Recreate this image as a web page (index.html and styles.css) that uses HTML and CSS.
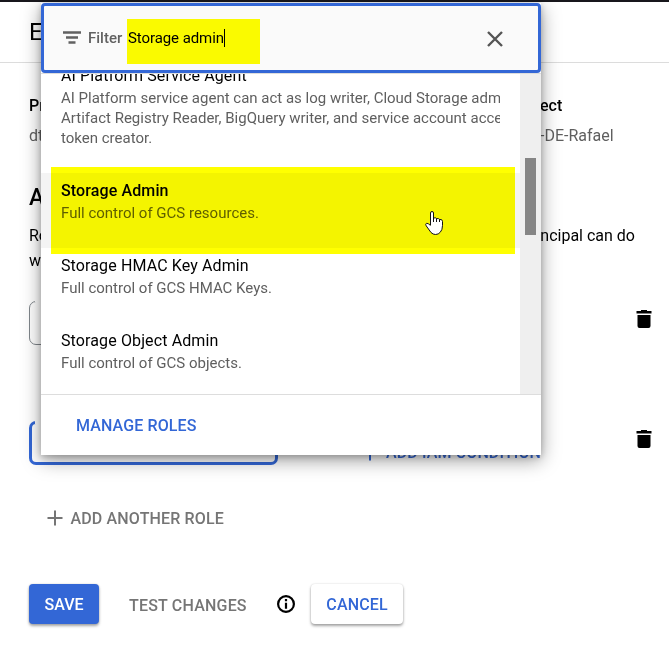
FILE: index.html
```html
<!DOCTYPE html>
<html lang="en">
<head>
<meta charset="utf-8">
<title>Permissions</title>
<link rel="stylesheet" href="styles.css">
</head>
<body>
<main class="page">
  <header class="page-header"><h1>E</h1></header>
  <section class="identity">
    <div class="identity-col"><strong>Pr</strong><span>dt</span></div>
    <div class="identity-col project"><strong>ect</strong><span>-DE-Rafael</span></div>
  </section>
  <section class="assign">
    <h2>A</h2>
    <div class="assign-line"><span>Ro</span><span class="line-end">ncipal can do</span></div>
    <div class="assign-line"><span>w</span></div>
  </section>
  <section class="role-row">
    <div class="select"></div>
    <svg class="trash" viewBox="0 0 16 18"><path d="M5 0h6v1h4.500v2.500H.5V1H5zM1.500 5h13v11q0 2-2 2h-9q-2 0-2-2z"/></svg>
  </section>
  <section class="role-row second">
    <div class="select active"></div>
    <div class="condition"><svg class="plus" viewBox="0 0 16 16"><path d="M8 .5v15M.5 8h15"/></svg><span>ADD IAM CONDITION</span></div>
    <svg class="trash" viewBox="0 0 16 18"><path d="M5 0h6v1h4.500v2.500H.5V1H5zM1.500 5h13v11q0 2-2 2h-9q-2 0-2-2z"/></svg>
  </section>
  <div class="add-role"><svg class="plus" viewBox="0 0 16 16"><path d="M8 .5v15M.5 8h15"/></svg><span>ADD ANOTHER ROLE</span></div>
  <footer class="actions">
    <button class="btn save">SAVE</button>
    <span class="test">TEST CHANGES</span>
    <svg class="info" viewBox="0 0 18 18"><circle cx="9" cy="9" r="7.900"/><path d="M9 4v2.200M9 7.700v6"/></svg>
    <button class="btn cancel">CANCEL</button>
  </footer>
</main>

<div class="panel">
  <div class="filter">
    <svg class="filter-icon" viewBox="0 0 18 13"><path d="M0 1.500h18M3 6.500h12M5.500 11.500h7"/></svg>
    <span class="filter-label">Filter</span>
    <span class="query"><span class="typed">Storage admin</span></span>
    <svg class="close" viewBox="0 0 16 16"><path d="M1 1l14 14M15 1L1 15"/></svg>
  </div>
  <div class="list">
    <div class="options">
      <div class="option first"><div class="name">AI Platform Service Agent</div><div class="desc">AI Platform service agent can act as log writer, Cloud Storage adm<br>Artifact Registry Reader, BigQuery writer, and service account acce<br>token creator.</div></div>
      <div class="option current"><div class="name">Storage Admin</div><div class="desc">Full control of GCS resources.</div></div>
      <div class="option"><div class="name">Storage HMAC Key Admin</div><div class="desc">Full control of GCS HMAC Keys.</div></div>
      <div class="option"><div class="name">Storage Object Admin</div><div class="desc">Full control of GCS objects.</div></div>
    </div>
    <div class="scrollbar"><div class="thumb"></div></div>
  </div>
  <div class="panel-footer">MANAGE ROLES</div>
  <div class="marker"></div>
  <svg class="pointer" viewBox="0 0 18 24"><path d="M5.500 14V2q0-1.500 1.500-1.500T8.500 2v5q2.600-.6 3 .6 2.400-.4 3 .8 3-.3 3 2v4q0 4.500-2.200 6.800Q13.500 23.500 10.500 23.500 8 23.500 6 21.500L1.200 14.800Q0 12.800 1.500 12.300 3 12 5.500 14.500M8.500 7v4M11.500 7.500V11M14.500 8.300V11"/></svg>
</div>
</body>
</html>
```

FILE: styles.css
```css
* { box-sizing: border-box; }
body { margin: 0; background: #fff; font-family: Roboto, sans-serif; font-size: 16px; color: #000; }
h1, h2 { margin: 0; font-weight: 400; }
svg { display: block; flex: none; }

.page { width: 669px; height: 656px; overflow: hidden; border-top: 2px solid #18171c; }
.page-header { height: 61px; padding: 15px 29px; border-bottom: 1px solid #dcdcdc; }
.page-header h1 { font-size: 24px; line-height: 30px; }

.identity { display: flex; height: 117px; padding: 31px 29px 0; }
.identity-col { display: flex; flex: none; flex-direction: column; width: 511px; line-height: 24px; gap: 6px; }
.identity-col strong { font-weight: 500; }
.identity-col span { color: #5f5f5f; }
.project { width: 130px; }

.assign { height: 121px; padding: 4px 29px 0; }
.assign h2 { font-size: 23px; font-weight: 500; line-height: 28px; margin-bottom: 11px; }
.assign-line { display: flex; height: 25px; line-height: 25px; }
.line-end { margin-left: auto; margin-right: 5px; }

.role-row { display: flex; align-items: flex-start; height: 120px; padding: 0 17px 0 29px; }
.select { position: relative; width: 249px; height: 44px; border: 1px solid #80868b; border-radius: 7px; }
.select.active { border: 3px solid #3367d6; }
/* label notch in the outlined field's top border */
.select::before { content: ""; position: absolute; left: 5px; top: -1px; width: 60px; height: 1px; background: #fff; }
.select.active::before { left: 3px; top: -3px; height: 3px; }
.trash { width: 16px; height: 18px; margin: 9px 0 0 auto; }
.second { height: 84px; }
.condition { display: flex; align-items: center; gap: 8px; margin: 20px 0 0 84px; color: #3367d6; font-weight: 500; line-height: 24px; letter-spacing: .12px; }
.plus { width: 16px; height: 16px; fill: none; stroke: currentColor; stroke-width: 2; }

.add-role { display: flex; align-items: center; gap: 7.500px; height: 26px; padding-left: 47px; color: #757575; font-weight: 500; letter-spacing: .15px; }
.actions { display: flex; align-items: center; margin-top: 52px; padding-left: 29px; height: 41px; }
.btn { height: 40px; border: 0; border-radius: 4px; padding: 1px 0 0; font: 500 16px Roboto, sans-serif; box-shadow: 0 2px 3px rgba(0,0,0,.35), 0 0 2px rgba(0,0,0,.15); }
.save { width: 70px; background: #3367d6; color: #fff; }
.test { width: 118px; margin: 3px 0 0 30px; color: #757575; font-weight: 500; letter-spacing: .2px; white-space: nowrap; }
.info { width: 18px; height: 18px; margin: 0 16px 0 30px; fill: none; stroke: #000; stroke-width: 2.200; }
.cancel { width: 92px; background: #fff; color: #3367d6; letter-spacing: .15px; }

.panel { position: absolute; left: 41px; top: 3px; width: 500px; height: 452px; display: flex; flex-direction: column; background: #fff; box-shadow: 0 5px 18px rgba(0,0,0,.4), 0 2px 6px rgba(0,0,0,.2); }
.filter { display: flex; align-items: flex-start; height: 70px; flex: none; border: 3px solid #3367d6; border-radius: 4px; background: #fafafa; }
.filter-icon { width: 18px; height: 13px; margin: 25px 0 0 19px; fill: none; stroke: #616161; stroke-width: 2.600; }
.filter-label { width: 39px; margin: 23px 0 0 7px; font-size: 15px; font-weight: 500; line-height: 18px; color: #616161; }
.query { width: 133px; height: 45px; margin-top: 13px; padding: 10px 0 0 1px; background: #fafa00; font-size: 15px; line-height: 18px; letter-spacing: -.08px; }
.typed { display: inline-block; border-right: 1px solid #000; }
.close { width: 16px; height: 16px; margin: 25px 35px 0 auto; fill: none; stroke: #555; stroke-width: 2.400; }

.list { display: flex; height: 321px; flex: none; overflow: hidden; border-top: 1px solid #ddd; }
.options { width: 479px; margin-top: -16px; }
.option { height: 75px; padding: 6px 20px 0; white-space: nowrap; }
.first { height: 115px; }
.current { background: #f4f4f4; }
.name { line-height: 24px; letter-spacing: .12px; }
.current .name { font-weight: 500; }
.desc { font-size: 15px; line-height: 20px; color: #5f5f5f; overflow: hidden; }
.scrollbar { width: 21px; background: #efefef; padding: 84px 5px 0; }
.thumb { height: 77px; background: #858585; }
.panel-footer { flex: 1; padding-left: 35px; border-top: 1px solid #ddd; color: #3367d6; font-weight: 500; line-height: 61px; letter-spacing: .12px; }

.marker { position: absolute; left: 10px; top: 164px; width: 464px; height: 87px; background: #ff0; mix-blend-mode: multiply; }
.pointer { position: absolute; left: 384px; top: 208px; width: 18px; height: 24px; fill: #fff; stroke: #111; stroke-width: 1; }
```
